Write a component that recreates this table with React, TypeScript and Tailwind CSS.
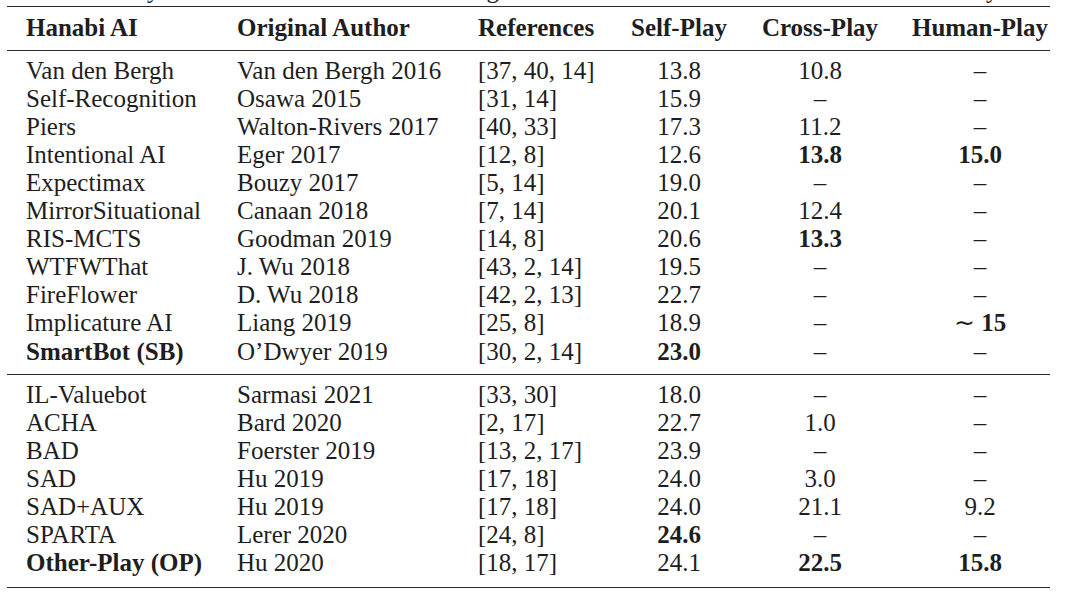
import React from "react";

type Cell = React.ReactNode;

const B = ({ children }: { children: React.ReactNode }) => <span className="font-bold">{children}</span>;

const D = "–";

const groupA: Cell[][] = [
  ["Van den Bergh", "Van den Bergh 2016", "[37, 40, 14]", "13.8", "10.8", D],
  ["Self-Recognition", "Osawa 2015", "[31, 14]", "15.9", D, D],
  ["Piers", "Walton-Rivers 2017", "[40, 33]", "17.3", "11.2", D],
  ["Intentional AI", "Eger 2017", "[12, 8]", "12.6", <B>13.8</B>, <B>15.0</B>],
  ["Expectimax", "Bouzy 2017", "[5, 14]", "19.0", D, D],
  ["MirrorSituational", "Canaan 2018", "[7, 14]", "20.1", "12.4", D],
  ["RIS-MCTS", "Goodman 2019", "[14, 8]", "20.6", <B>13.3</B>, D],
  ["WTFWThat", "J. Wu 2018", "[43, 2, 14]", "19.5", D, D],
  ["FireFlower", "D. Wu 2018", "[42, 2, 13]", "22.7", D, D],
  [
    "Implicature AI",
    "Liang 2019",
    "[25, 8]",
    "18.9",
    D,
    <span>
      ∼ <B>15</B>
    </span>,
  ],
  [<B>SmartBot (SB)</B>, "O’Dwyer 2019", "[30, 2, 14]", <B>23.0</B>, D, D],
];

const groupB: Cell[][] = [
  ["IL-Valuebot", "Sarmasi 2021", "[33, 30]", "18.0", D, D],
  ["ACHA", "Bard 2020", "[2, 17]", "22.7", "1.0", D],
  ["BAD", "Foerster 2019", "[13, 2, 17]", "23.9", D, D],
  ["SAD", "Hu 2019", "[17, 18]", "24.0", "3.0", D],
  ["SAD+AUX", "Hu 2019", "[17, 18]", "24.0", "21.1", "9.2"],
  ["SPARTA", "Lerer 2020", "[24, 8]", <B>24.6</B>, D, D],
  [<B>Other-Play (OP)</B>, "Hu 2020", "[18, 17]", "24.1", <B>22.5</B>, <B>15.8</B>],
];

function Row({ cells, header = false }: { cells: Cell[]; header?: boolean }) {
  return (
    <div
      className={
        "grid grid-cols-[230px_241px_142px_118px_164px_148px] leading-[28.1px] whitespace-nowrap " +
        (header ? "font-bold" : "")
      }
    >
      <div className="pl-[19px]">{cells[0]}</div>
      <div>{cells[1]}</div>
      <div>{cells[2]}</div>
      <div className="text-center">{cells[3]}</div>
      <div className="text-center">{cells[4]}</div>
      <div className="text-center pl-[8px]">{cells[5]}</div>
    </div>
  );
}

export default function App() {
  return (
    <div className="w-[1080px] h-[592px] overflow-hidden bg-white text-[#1e1e1e] text-[25px] font-['Liberation_Serif','Times_New_Roman',serif]">
      <div className="h-[5.5px] overflow-hidden">
        <div className="flex -mt-[24px] leading-[28px] whitespace-nowrap">
          <span className="ml-[147px]">y</span>
          <span className="ml-[327px]">g</span>
          <span className="ml-[487px]">y</span>
        </div>
      </div>
      <div className="ml-[7px] w-[1043px]">
        <div className="h-[1.5px] bg-[#2a2a2a]" />
        <div className="pt-[6.5px] pb-[8px]">
          <Row header cells={["Hanabi AI", "Original Author", "References", "Self-Play", "Cross-Play", "Human-Play"]} />
        </div>
        <div className="h-px bg-[#2a2a2a]" />
        <div className="pt-[6px] pb-[8px]">
          {groupA.map((r, i) => (
            <Row key={i} cells={r} />
          ))}
        </div>
        <div className="h-px bg-[#2a2a2a]" />
        <div className="pt-[6.3px] pb-[9.4px]">
          {groupB.map((r, i) => (
            <Row key={i} cells={r} />
          ))}
        </div>
        <div className="h-[1.5px] bg-[#2a2a2a]" />
      </div>
    </div>
  );
}
